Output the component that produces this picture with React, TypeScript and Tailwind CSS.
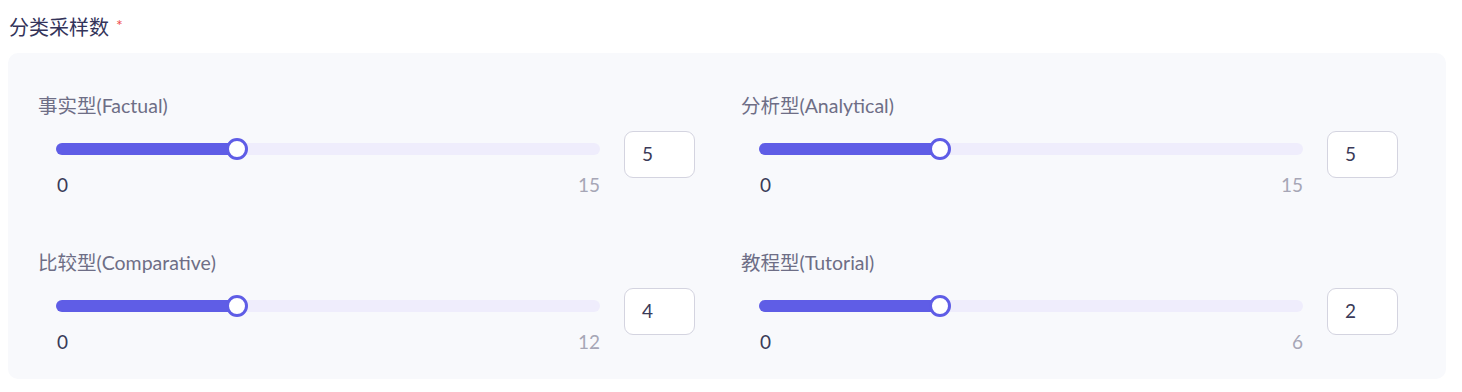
import React from "react";

type Category = { label: string; value: number; max: number };

const categories: Category[] = [
  { label: "事实型(Factual)", value: 5, max: 15 },
  { label: "分析型(Analytical)", value: 5, max: 15 },
  { label: "比较型(Comparative)", value: 4, max: 12 },
  { label: "教程型(Tutorial)", value: 2, max: 6 },
];

function SliderField({ item }: { item: Category }) {
  const pct = (item.value / item.max) * 100;

  return (
    <div className="flex flex-col">
      <div className="h-[24px] text-[19.5px] leading-[24px] text-[#6e6e86]">{item.label}</div>
      <div className="flex items-start">
        <div className="ml-[18px] w-[544px]">
          <div className="relative mt-[20px] h-[22px]">
            <div className="absolute left-0 right-0 top-[5px] h-[12px] rounded-full bg-[#efedfc]" />
            <div
              className="absolute left-0 top-[5px] h-[12px] rounded-full bg-[#5f5de6]"
              style={{ width: `${pct}%` }}
            />
            <div
              className="absolute top-0 h-[22px] w-[22px] -translate-x-1/2 rounded-full border-[3px] border-[#5f5de6] bg-white"
              style={{ left: `${pct}%` }}
            />
          </div>
          <div className="mt-[13px] flex justify-between text-[19px] leading-[24px]">
            <span className="pl-[1px] text-[#3a3a58]">0</span>
            <span className="text-[#a6a6b6]">{item.max}</span>
          </div>
        </div>
        <div className="ml-[24px] mt-[13px] flex h-[47px] w-[71px] items-center rounded-[9px] border border-[#d4d4e0] bg-white pl-[17px] text-[19px] text-[#3a3a58]">
          {item.value}
        </div>
      </div>
    </div>
  );
}

export default function App() {
  return (
    <div
      className="h-[392px] w-[1462px] bg-white"
      style={{ fontFamily: 'Lato, "Noto Sans CJK SC", sans-serif' }}
    >
      <div className="flex items-start pl-[9px] pt-[13px]">
        <span className="h-[28px] text-[20px] leading-[28px] text-[#34345a]">分类采样数</span>
        <span className="ml-[7px] mt-[3px] text-[16px] leading-[18px] text-[#ef4a4a]">*</span>
      </div>

      <div className="ml-[8px] mt-[12px] w-[1438px] rounded-[10px] bg-[#f8f9fc] pb-[25px] pl-[30px] pt-[41px]">
        <div className="grid grid-cols-[658px_658px] gap-x-[45px] gap-y-[54px]">
          {categories.map((item) => (
            <SliderField key={item.label} item={item} />
          ))}
        </div>
      </div>
    </div>
  );
}
